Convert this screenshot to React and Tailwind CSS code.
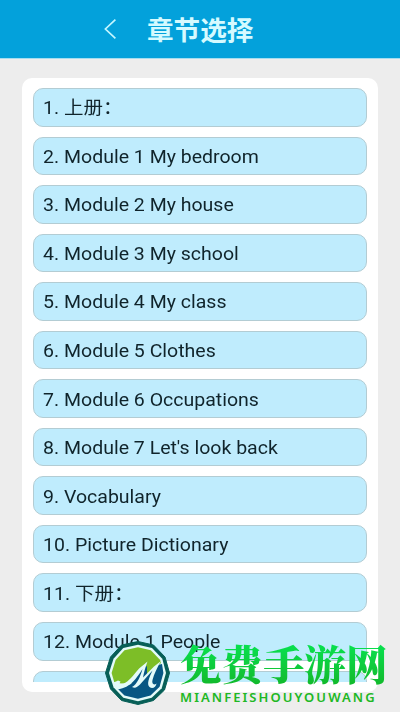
import React from "react";

const chapters = [
  "上册：",
  "Module 1 My bedroom",
  "Module 2 My house",
  "Module 3 My school",
  "Module 4 My class",
  "Module 5 Clothes",
  "Module 6 Occupations",
  "Module 7 Let's look back",
  "Vocabulary",
  "Picture Dictionary",
  "下册：",
  "Module 1 People",
  "",
];

const Header = () => (
  <header className="flex h-[59px] shrink-0 items-center border-b border-[#a5ddf0] bg-[#03a1db] pl-[104px]">
    <svg
      className="h-5 w-3"
      viewBox="0 0 12 20"
      fill="none"
      stroke="#c3f6ff"
      strokeWidth="1.7"
    >
      <path d="M11.4 .7 1.4 10l10 9.3" />
    </svg>
    <h1 className="ml-[31px] text-[26.6px] leading-none font-bold whitespace-nowrap text-[#d5faff] [font-family:'Noto_Sans_CJK_SC',sans-serif]">
      章节选择
    </h1>
  </header>
);

const ChapterRow = ({ number, title }) => (
  <li className="flex h-[38.5px] shrink-0 items-center rounded-[10px] border border-[#b3ccd3] bg-[#bfecfd] pt-[2px] pl-[8.5px]">
    {title && (
      <span className="origin-left scale-x-[1.084] text-[18px] leading-none whitespace-nowrap text-[#10242b]">
        {number}. {title}
      </span>
    )}
  </li>
);

const Logo = () => (
  <svg className="h-[66px] w-[68px] shrink-0" viewBox="0 0 68 66">
    <path
      d="M34 1.5 49.5 5 61 17 65.5 33 60.5 50 49.5 60.5 34 64.5 17.5 60.5 6.5 49 1.5 33 6.5 17 17.5 5Z"
      fill="#075f57"
      stroke="#075f57"
      strokeWidth="1"
      strokeLinejoin="round"
    />
    <path
      d="M34 4.8 48 8 58.3 18.7 62 33 57.7 48.2 47.7 57.7 34 61.2 19.3 57.7 9.5 47.3 5 33 9.5 18.7 19.3 8Z"
      fill="#e4fbf9"
    />
    <path
      d="M34 7.2 46.8 10.2 56.2 20 57 23 37 41 23 44 10.5 43 7.6 33 11.6 20 20.5 10.2Z"
      fill="#7dbe27"
    />
    <path
      d="M58 24 59.4 33 55.6 46.8 46.5 55.5 34 58.7 20.5 55.5 13.5 48.5 27 44 35 31 43 26 43 35 54 25Z"
      fill="#075783"
    />
    <path
      d="M9 42.5 12 41.5 14 40.5 16.5 41.5 15.5 43.5C22 45 27 38 32.5 31.5 36 27 39.5 25 43.5 21.5 41.5 27 40 32 39 37.5L50 26.5 57 21C53 28 50 34 48.5 40 47.5 44 50 45.5 52.5 43.5 52 47 48.5 49.5 45.5 47 42.5 44 45 38 48.5 30.5L36 44.5C33 47.5 31 48.5 28 47 33.5 44 36.5 36 38.5 29 32 39 27 47 14 49.5L11.5 47Z"
      fill="#e4fbf9"
    />
  </svg>
);

const Watermark = () => (
  <div className="absolute top-[640px] left-[104px] flex">
    <Logo />
    <div className="ml-2 flex flex-col">
      <span className="-mt-px origin-top scale-y-[0.98] bg-gradient-to-b from-[#05e653] to-[#12b82a] bg-clip-text text-[41.5px] leading-[48px] font-black whitespace-nowrap text-transparent [font-family:'Noto_Serif_CJK_SC','Noto_Sans_CJK_SC',serif]">
        免费手游网
      </span>
      <span className="mt-[3px] text-[13px] leading-[14px] font-semibold tracking-[2.05px] whitespace-nowrap text-[#20b824] [font-family:'Noto_Sans',sans-serif]">
        MIANFEISHOUYOUWANG
      </span>
    </div>
  </div>
);

export default function App() {
  return (
    <div className="relative flex h-[712px] w-[400px] flex-col overflow-hidden bg-[#ededed] [font-family:Roboto,'Noto_Sans_CJK_SC',sans-serif]">
      <Header />
      <main className="mx-[22px] mt-[19px] h-[614px] rounded-[10px] bg-white px-[11px] pt-[10px] pb-[10px]">
        <ul className="flex h-full flex-col gap-[10.05px] overflow-hidden">
          {chapters.map((title, index) => (
            <ChapterRow key={index} number={index + 1} title={title} />
          ))}
        </ul>
      </main>
      <Watermark />
    </div>
  );
}
